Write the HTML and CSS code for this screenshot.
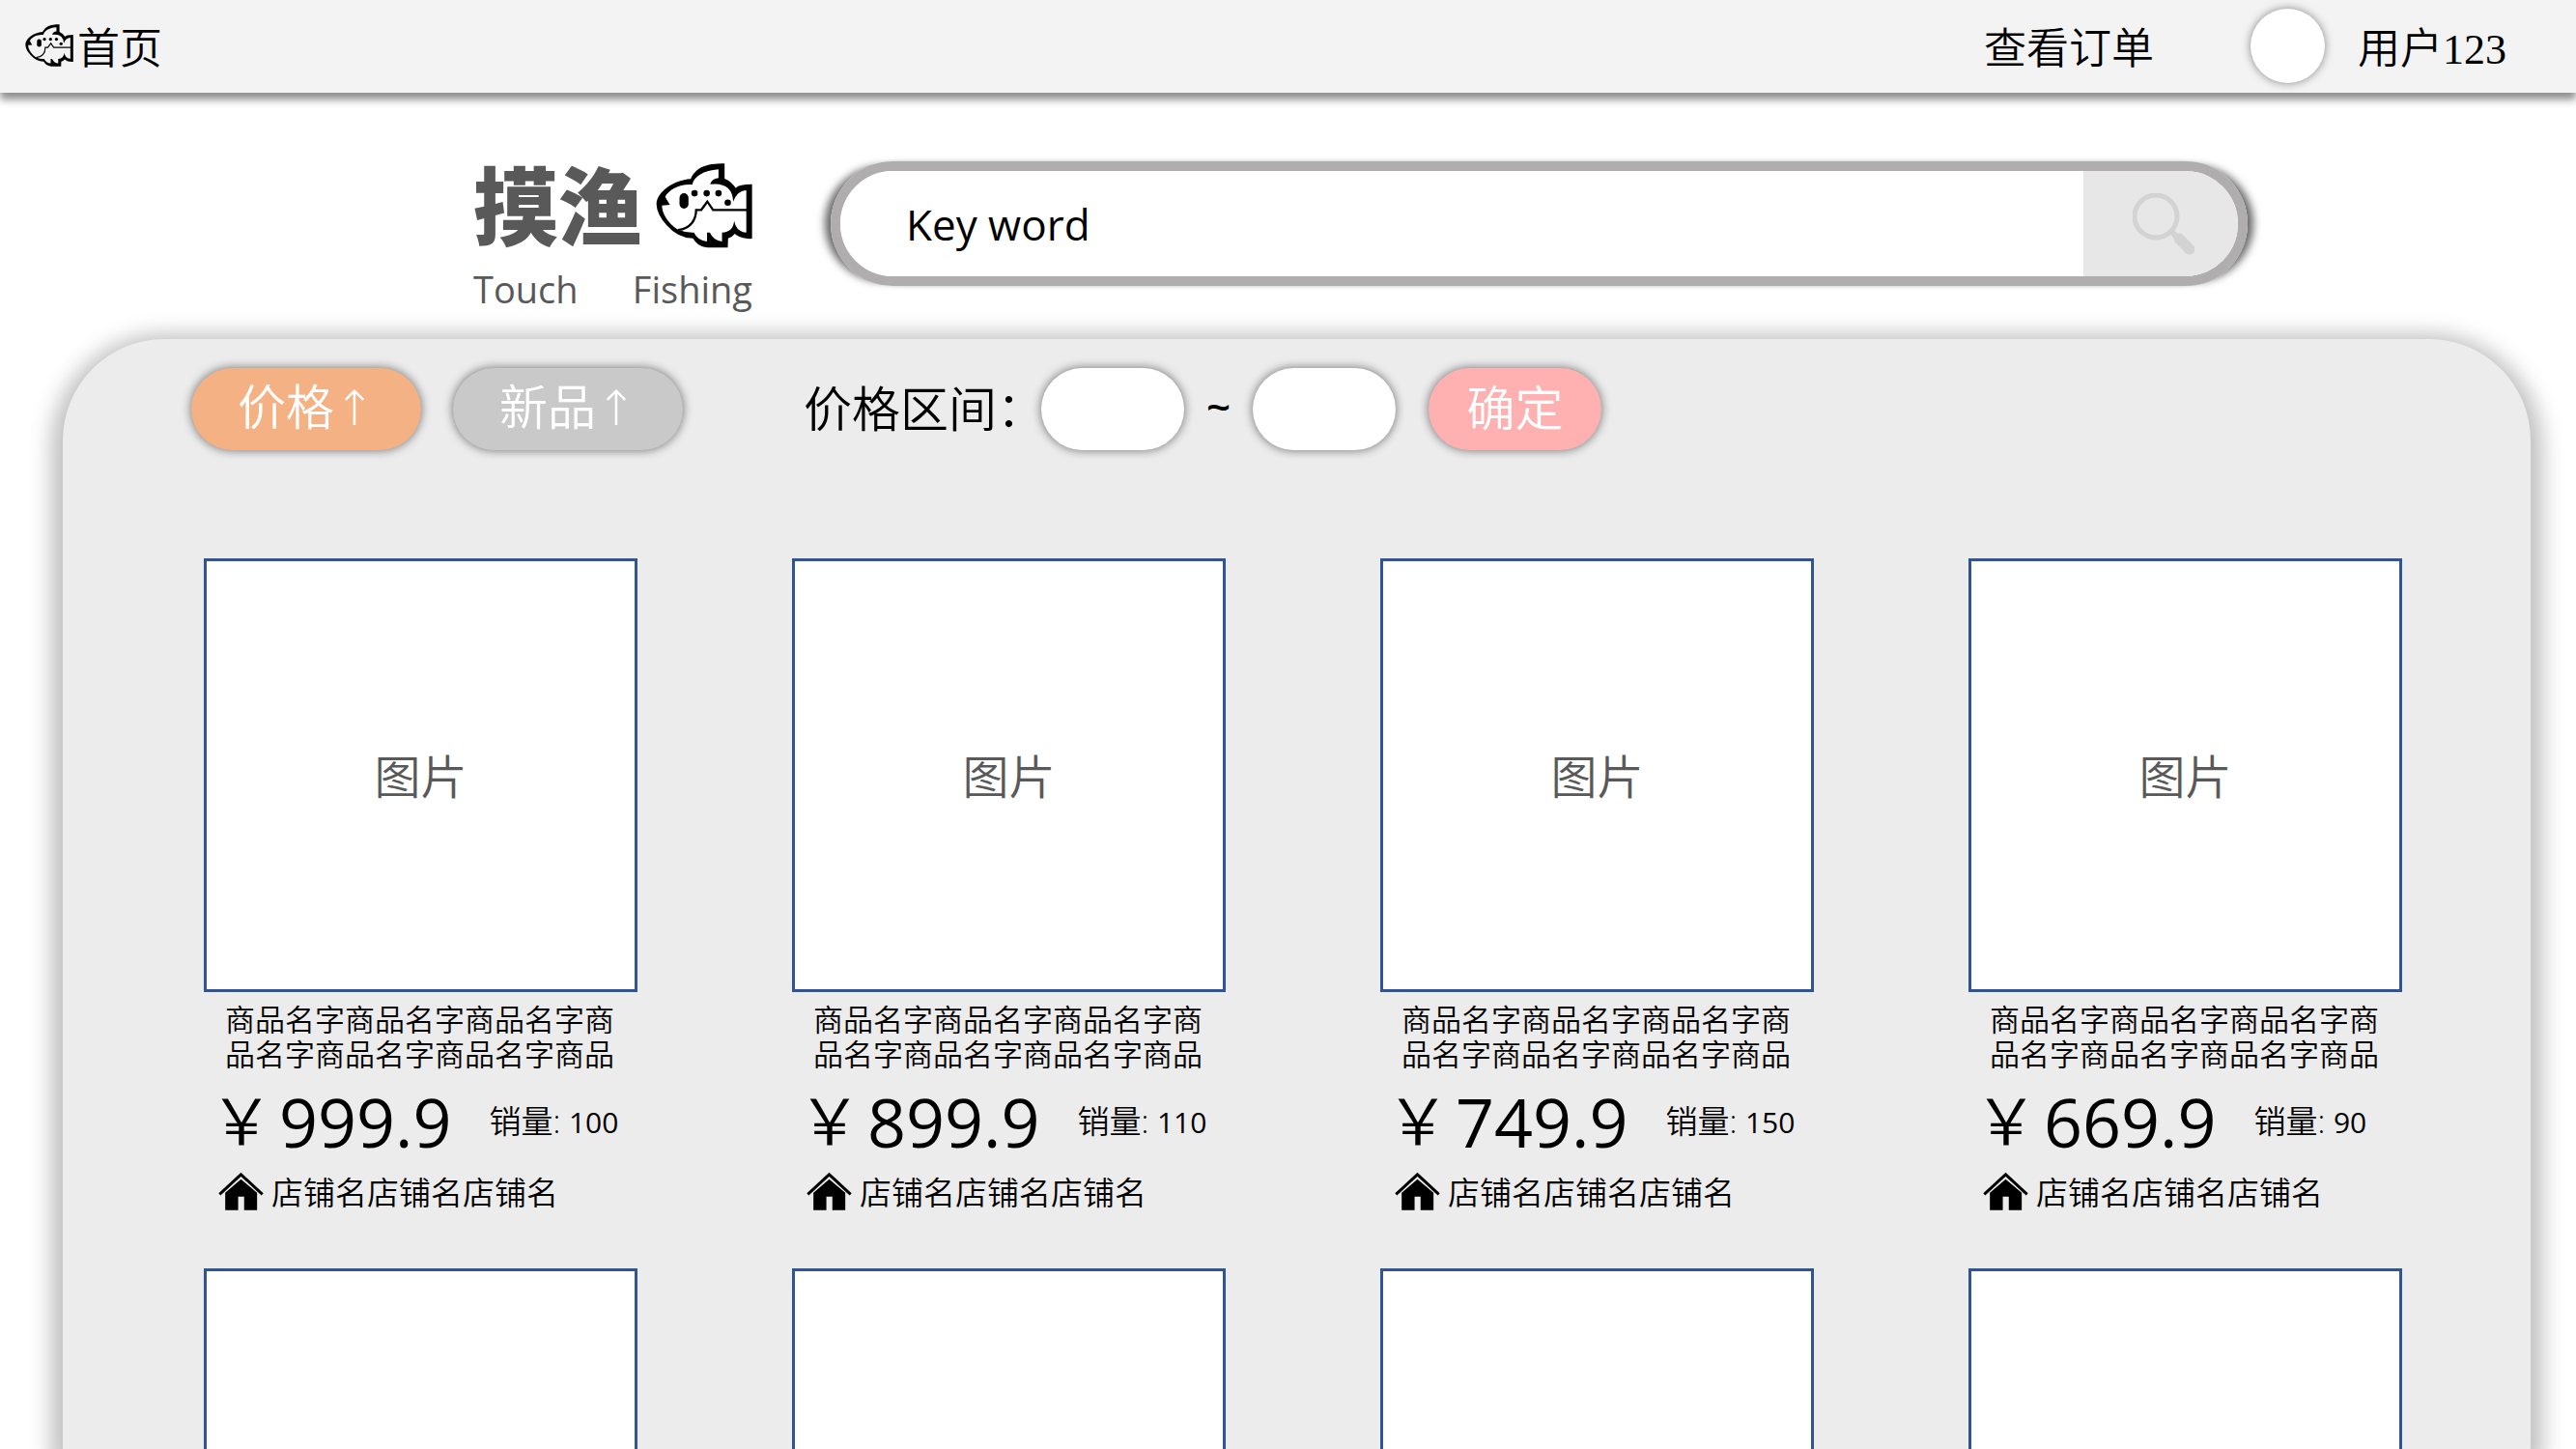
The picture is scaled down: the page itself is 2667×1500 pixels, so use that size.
FILE: index.html
```html
<!DOCTYPE html>
<html lang="zh-CN">
<head>
<meta charset="utf-8">
<title>摸渔 Touch Fishing</title>
<link rel="stylesheet" href="styles.css">
</head>
<body>
<svg class="sprite" aria-hidden="true">
  <symbol id="fish" viewBox="626 58 302 266">
    <path fill-rule="evenodd" d="M628 188C626 150 680 110 735 107C752 72 780 59 841 59L841 106Q862 114 876 136Q884 124 927 124L927 294Q892 296 873 279Q865 290 852 293L851 322L788 322Q758 320 742 293Q695 292 660 252Q629 218 628 188ZM655 163C668 140 700 122 740 125C745 100 775 80 822 77L822 104Q800 106 796 124Q865 116 868 178Q878 146 909 143L909 275Q876 272 871 238Q868 274 833 275L833 303Q806 300 795 275L786 275L786 303Q757 300 745 275Q720 276 695 266C662 244 645 214 645 190L670 188Z"/>
    <path fill="none" stroke="currentColor" stroke-width="7" d="M695 267C735 262 752 235 752 204L768 204L787 178L805 204L912 204"/>
    <rect x="700" y="152" width="28" height="48" rx="14"/>
    <circle cx="747" cy="152" r="10"/><circle cx="785" cy="152" r="10"/><circle cx="822" cy="152" r="10"/><circle cx="851" cy="181" r="10"/>
  </symbol>
  <symbol id="house" viewBox="108 643 144 122">
    <path fill="none" stroke="currentColor" stroke-width="9" d="M112 713L180 650L248 713"/>
    <path d="M130 708L180 665L231 708V763H190V720H171V763H130Z"/>
  </symbol>
</svg>

<header class="topbar">
  <a class="home" href="#"><svg class="home-icon"><use href="#fish"/></svg>首页</a>
  <nav class="account">
    <a href="#">查看订单</a>
    <a class="user" href="#"><span class="avatar"></span>用户123</a>
  </nav>
</header>

<section class="masthead">
  <div class="brand">
    <div class="brand-mark">
      <h1 class="brand-name">摸渔</h1>
      <svg class="brand-icon"><use href="#fish"/></svg>
    </div>
    <div class="brand-latin"><span>Touch</span><span>Fishing</span></div>
  </div>
  <form class="search">
    <input class="search-input" type="text" value="Key word" aria-label="搜索">
    <button class="search-button" type="button" aria-label="搜索">
      <svg class="search-icon" viewBox="0 0 64 64"><circle cx="24" cy="24" r="22" fill="none" stroke="currentColor" stroke-width="5"/><path d="M39 39L47 46" stroke="currentColor" stroke-width="6"/><path d="M48 47L59 58" stroke="currentColor" stroke-width="11" stroke-linecap="round"/></svg>
    </button>
  </form>
</section>

<main class="panel">
  <form class="filters">
    <div class="sorts">
      <button class="pill pill-price" type="button">价格<span class="arrow">↑</span></button>
      <button class="pill pill-new" type="button">新品<span class="arrow">↑</span></button>
    </div>
    <div class="range">
      <label class="range-label" for="min">价格区间：</label>
      <input class="range-input" id="min" type="text">
      <span class="tilde">~</span>
      <input class="range-input" type="text" aria-label="最高价格">
      <button class="pill pill-ok" type="button">确定</button>
    </div>
  </form>

  <div class="goods">
    <article class="card">
      <div class="picture">图片</div>
      <p class="name">商品名字商品名字商品名字商品名字商品名字商品名字商品</p>
      <p class="deal"><span class="yen">￥</span><span class="price">999.9</span><span class="sold">销量: <span class="count">100</span></span></p>
      <p class="shop"><svg class="shop-icon"><use href="#house"/></svg>店铺名店铺名店铺名</p>
    </article>
    <article class="card">
      <div class="picture">图片</div>
      <p class="name">商品名字商品名字商品名字商品名字商品名字商品名字商品</p>
      <p class="deal"><span class="yen">￥</span><span class="price">899.9</span><span class="sold">销量: <span class="count">110</span></span></p>
      <p class="shop"><svg class="shop-icon"><use href="#house"/></svg>店铺名店铺名店铺名</p>
    </article>
    <article class="card">
      <div class="picture">图片</div>
      <p class="name">商品名字商品名字商品名字商品名字商品名字商品名字商品</p>
      <p class="deal"><span class="yen">￥</span><span class="price">749.9</span><span class="sold">销量: <span class="count">150</span></span></p>
      <p class="shop"><svg class="shop-icon"><use href="#house"/></svg>店铺名店铺名店铺名</p>
    </article>
    <article class="card">
      <div class="picture">图片</div>
      <p class="name">商品名字商品名字商品名字商品名字商品名字商品名字商品</p>
      <p class="deal"><span class="yen">￥</span><span class="price">669.9</span><span class="sold">销量: <span class="count">90</span></span></p>
      <p class="shop"><svg class="shop-icon"><use href="#house"/></svg>店铺名店铺名店铺名</p>
    </article>
    <article class="card"><div class="picture"></div></article>
    <article class="card"><div class="picture"></div></article>
    <article class="card"><div class="picture"></div></article>
    <article class="card"><div class="picture"></div></article>
  </div>
</main>
</body>
</html>
```
FILE: styles.css
```css
* { box-sizing: border-box; }

body {
  display: flex;
  flex-direction: column;
  height: 100vh;
  margin: 0;
  overflow: hidden;
  background: #fff;
  color: #000;
  font-family: "Open Sans", "Noto Sans CJK SC", sans-serif;
  font-weight: 350;
}

h1, p { margin: 0; }
a { color: inherit; text-decoration: none; }
svg { flex: none; fill: currentColor; }
.sprite { display: none; }

button, input {
  margin: 0;
  border: 0;
  color: inherit;
  font: inherit;
}

.topbar {
  display: flex;
  flex: none;
  align-items: center;
  justify-content: space-between;
  height: 96px;
  padding: 0 72px 2px 26px;
  background: #f3f3f3;
  box-shadow: 0 7px 8px rgba(0, 0, 0, 0.45);
  font-family: "Liberation Serif", "Noto Sans CJK SC", serif;
  font-size: 44px;
}

.home, .account, .user { display: flex; align-items: center; }
.home { gap: 4px; }
.home-icon { width: 50px; height: 44px; }
.account { gap: 100px; }
.user { gap: 34px; }

.avatar {
  width: 77px;
  height: 77px;
  border-radius: 50%;
  background: #fff;
  box-shadow: 0 0 10px rgba(0, 0, 0, 0.45);
}

.masthead {
  display: flex;
  flex: none;
  align-items: flex-start;
  gap: 81px;
  height: 255px;
  padding: 71px 340px 0 490px;
}

.brand { width: 289px; color: #595959; }
.brand-mark { display: flex; align-items: center; justify-content: space-between; height: 92px; }
.brand-name { font-size: 88px; font-weight: 900; line-height: 88px; }
.brand-icon { width: 100px; height: 88px; color: #000; }

.brand-latin {
  display: flex;
  justify-content: space-between;
  font-size: 38px;
  font-weight: 400;
  line-height: 80px;
}

.search {
  display: flex;
  flex: 1;
  height: 129px;
  overflow: hidden;
  border: 10px solid #afadad;
  border-radius: 65px;
  box-shadow: 11px 0 8px -5px rgba(0, 0, 0, 0.6), -11px 0 8px -5px rgba(0, 0, 0, 0.6);
}

.search-input {
  flex: 1;
  min-width: 0;
  padding: 0 0 0 68px;
  font-size: 44px;
  font-weight: 400;
}

.search-button {
  display: flex;
  align-items: center;
  justify-content: center;
  width: 160px;
  padding: 0 0 0 6px;
  background: #e7e7e7;
  color: #d3d3d3;
}

.search-icon { width: 64px; height: 64px; }

.panel {
  flex: 1;
  min-height: 0;
  margin: 0 47px 0 65px;
  overflow: hidden;
  border-radius: 105px 105px 0 0;
  background: #ececec;
  box-shadow: 0 7px 22px 12px rgba(0, 0, 0, 0.25);
}

.filters {
  display: flex;
  gap: 125px;
  padding: 30px 133px 112px;
  font-size: 50px;
}

.sorts { display: flex; gap: 33px; }
.range { display: flex; align-items: center; }
.range-label { width: 246px; padding-bottom: 6px; white-space: nowrap; }

.pill, .range-input {
  height: 85px;
  border-radius: 43px;
  box-shadow: 0 0 10px 1px rgba(0, 0, 0, 0.45);
}

.pill { width: 238px; padding: 0 0 4px; color: #fff; line-height: 80px; }
.pill-price { background: #f4b183; }
.pill-new { background: #c9c9c9; }
.pill-ok { width: 179px; margin-left: 34px; background: #ffb0b0; }
.arrow { font-family: "DejaVu Sans Light", "DejaVu Sans", sans-serif; font-weight: 200; }
.range-input { width: 148px; padding: 0 32px; background: #fff; }
.tilde { width: 71px; padding-bottom: 8px; font-weight: 600; font-size: 44px; text-align: center; }

.goods {
  display: grid;
  grid-template-columns: repeat(4, 1fr);
  gap: 48px 160px;
  padding: 0 133px 0 146px;
}

.picture {
  display: flex;
  align-items: center;
  justify-content: center;
  aspect-ratio: 1;
  padding-bottom: 4px;
  border: 3px solid #2f5597;
  background: #fff;
  color: #595959;
  font-size: 48px;
}

.name {
  width: 408px;
  margin: 10px 0 0 22px;
  font-size: 31px;
  line-height: 36px;
}

.deal {
  display: flex;
  align-items: center;
  height: 80px;
  margin-top: 12px;
  padding-left: 6px;
  line-height: 72px;
  white-space: nowrap;
}

.yen { width: 72px; padding-bottom: 4px; font-size: 66px; }
.price { font-size: 70px; font-weight: 400; }
.sold { margin-left: 39px; font-size: 33px; }
.count { font-size: 30px; font-weight: 400; }

.shop {
  display: flex;
  align-items: center;
  gap: 8px;
  height: 64px;
  padding-left: 15px;
  font-size: 33px;
}

.shop-icon { width: 47px; height: 41px; }
```
